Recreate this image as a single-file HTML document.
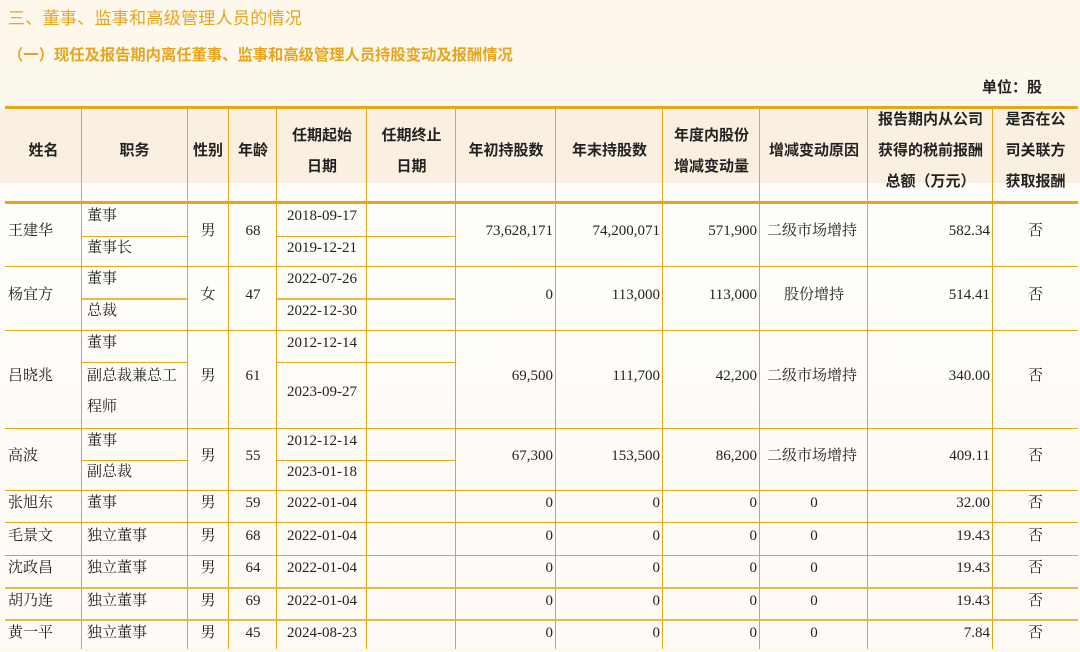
<!DOCTYPE html>
<html><head><meta charset="utf-8"><style>
*{margin:0;padding:0;box-sizing:border-box}
body{width:1080px;height:649px;overflow:hidden;position:relative;background:linear-gradient(#fdf7ec,#fdf9f2 40%,#fdf7ee);font-family:"Liberation Serif","Noto Serif CJK SC",serif;color:#222}
.h1{position:absolute;left:8px;top:4px;font:17px "Liberation Sans","Noto Sans CJK SC",sans-serif;color:#e8a51c;letter-spacing:.3px}
.h2{position:absolute;left:8px;top:43px;font:bold 15.3px "Liberation Sans","Noto Sans CJK SC",sans-serif;color:#e8a51c}
.unit{position:absolute;left:982px;top:76px;font:bold 15px "Liberation Sans","Noto Sans CJK SC",sans-serif;color:#222}
.hb{position:absolute;left:0;top:109px;width:1080px;height:74px;background:#faf0e1}
.wb{position:absolute;left:0;top:183px;width:1080px;height:466px;background:linear-gradient(#fffdf9,#fffcf7)}
.l{position:absolute;background:#e6a618}
.c{position:absolute;display:flex;align-items:center;font-size:15px;line-height:30px;padding-bottom:6px;white-space:nowrap}
.ce{justify-content:center;text-align:center}
.r{justify-content:flex-end;padding-right:3px}
.lf{padding-left:5px}
.hd{font:bold 15px "Liberation Sans","Noto Sans CJK SC",sans-serif;line-height:31px;color:#222;padding-bottom:0}
</style></head><body>
<div class="h1">三、董事、监事和高级管理人员的情况</div>
<div class="h2">（一）现任及报告期内离任董事、监事和高级管理人员持股变动及报酬情况</div>
<div class="unit">单位：股</div>
<div class="hb"></div>
<div class="wb"></div>

<div class="l" style="left:5px;top:106px;width:1073px;height:3px"></div>
<div class="l" style="left:5px;top:201px;width:1073px;height:3px"></div>
<div class="l" style="left:5px;top:266px;width:1073px;height:1px"></div>
<div class="l" style="left:5px;top:330px;width:1073px;height:1px"></div>
<div class="l" style="left:5px;top:428px;width:1073px;height:1px"></div>
<div class="l" style="left:5px;top:490px;width:1073px;height:1px"></div>
<div class="l" style="left:5px;top:522px;width:1073px;height:1px"></div>
<div class="l" style="left:5px;top:555px;width:1073px;height:1px"></div>
<div class="l" style="left:5px;top:587px;width:1073px;height:2px;opacity:.8"></div>
<div class="l" style="left:5px;top:619px;width:1073px;height:2px;opacity:.8"></div>
<div class="l" style="left:82px;top:236px;width:105px;height:1px"></div>
<div class="l" style="left:277px;top:236px;width:179px;height:1px"></div>
<div class="l" style="left:82px;top:298px;width:105px;height:2px;opacity:.8"></div>
<div class="l" style="left:277px;top:298px;width:179px;height:2px;opacity:.8"></div>
<div class="l" style="left:82px;top:362px;width:105px;height:1px"></div>
<div class="l" style="left:277px;top:362px;width:179px;height:1px"></div>
<div class="l" style="left:82px;top:460px;width:105px;height:1px"></div>
<div class="l" style="left:277px;top:460px;width:179px;height:1px"></div>
<div class="l" style="left:81px;top:107px;width:1px;height:542px"></div>
<div class="l" style="left:187px;top:107px;width:1px;height:542px"></div>
<div class="l" style="left:228px;top:107px;width:1px;height:542px"></div>
<div class="l" style="left:276px;top:107px;width:1px;height:542px"></div>
<div class="l" style="left:366px;top:107px;width:1px;height:542px"></div>
<div class="l" style="left:455px;top:107px;width:1px;height:542px"></div>
<div class="l" style="left:555px;top:107px;width:1px;height:542px"></div>
<div class="l" style="left:662px;top:107px;width:1px;height:542px"></div>
<div class="l" style="left:759px;top:107px;width:1px;height:542px"></div>
<div class="l" style="left:867px;top:107px;width:1px;height:542px"></div>
<div class="l" style="left:992px;top:107px;width:1px;height:542px"></div>

<div class="c ce hd" style="left:5px;top:135px;width:77px;height:30px">姓名</div>
<div class="c ce hd" style="left:82px;top:135px;width:105px;height:30px">职务</div>
<div class="c ce hd" style="left:187px;top:135px;width:42px;height:30px">性别</div>
<div class="c ce hd" style="left:229px;top:135px;width:48px;height:30px">年龄</div>
<div class="c ce hd" style="left:277px;top:120px;width:90px;height:62px">任期起始<br>日期</div>
<div class="c ce hd" style="left:367px;top:120px;width:89px;height:62px">任期终止<br>日期</div>
<div class="c ce hd" style="left:456px;top:135px;width:100px;height:30px">年初持股数</div>
<div class="c ce hd" style="left:556px;top:135px;width:107px;height:30px">年末持股数</div>
<div class="c ce hd" style="left:663px;top:120px;width:97px;height:62px">年度内股份<br>增减变动量</div>
<div class="c ce hd" style="left:760px;top:135px;width:108px;height:30px">增减变动原因</div>
<div class="c ce hd" style="left:868px;top:104px;width:125px;height:93px">报告期内从公司<br>获得的税前报酬<br>总额（万元）</div>
<div class="c ce hd" style="left:993px;top:104px;width:85px;height:93px">是否在公<br>司关联方<br>获取报酬</div>

<div class="c lf" style="left:3px;top:202px;width:79px;height:64px">王建华</div>
<div class="c lf" style="left:82px;top:202px;width:105px;height:34px">董事</div>
<div class="c lf" style="left:82px;top:236px;width:105px;height:30px">董事长</div>
<div class="c ce" style="left:187px;top:202px;width:42px;height:64px">男</div>
<div class="c ce" style="left:229px;top:202px;width:48px;height:64px">68</div>
<div class="c ce" style="left:277px;top:202px;width:90px;height:34px">2018-09-17</div>
<div class="c ce" style="left:277px;top:236px;width:90px;height:30px">2019-12-21</div>
<div class="c r" style="left:456px;top:202px;width:100px;height:64px">73,628,171</div>
<div class="c r" style="left:556px;top:202px;width:107px;height:64px">74,200,071</div>
<div class="c r" style="left:663px;top:202px;width:97px;height:64px">571,900</div>
<div class="c lf" style="left:762px;top:202px;width:106px;height:64px">二级市场增持</div>
<div class="c r" style="left:868px;top:202px;width:125px;height:64px">582.34</div>
<div class="c ce" style="left:993px;top:202px;width:85px;height:64px">否</div>

<div class="c lf" style="left:3px;top:266px;width:79px;height:64px">杨宜方</div>
<div class="c lf" style="left:82px;top:266px;width:105px;height:32px">董事</div>
<div class="c lf" style="left:82px;top:298px;width:105px;height:32px">总裁</div>
<div class="c ce" style="left:187px;top:266px;width:42px;height:64px">女</div>
<div class="c ce" style="left:229px;top:266px;width:48px;height:64px">47</div>
<div class="c ce" style="left:277px;top:266px;width:90px;height:32px">2022-07-26</div>
<div class="c ce" style="left:277px;top:298px;width:90px;height:32px">2022-12-30</div>
<div class="c r" style="left:456px;top:266px;width:100px;height:64px">0</div>
<div class="c r" style="left:556px;top:266px;width:107px;height:64px">113,000</div>
<div class="c r" style="left:663px;top:266px;width:97px;height:64px">113,000</div>
<div class="c ce" style="left:760px;top:266px;width:108px;height:64px">股份增持</div>
<div class="c r" style="left:868px;top:266px;width:125px;height:64px">514.41</div>
<div class="c ce" style="left:993px;top:266px;width:85px;height:64px">否</div>

<div class="c lf" style="left:3px;top:330px;width:79px;height:98px">吕晓兆</div>
<div class="c lf" style="left:82px;top:330px;width:105px;height:32px">董事</div>
<div class="c lf" style="left:82px;top:362px;width:105px;height:66px;white-space:normal;line-height:31px">副总裁兼总工<br>程师</div>
<div class="c ce" style="left:187px;top:330px;width:42px;height:98px">男</div>
<div class="c ce" style="left:229px;top:330px;width:48px;height:98px">61</div>
<div class="c ce" style="left:277px;top:330px;width:90px;height:32px">2012-12-14</div>
<div class="c ce" style="left:277px;top:362px;width:90px;height:66px">2023-09-27</div>
<div class="c r" style="left:456px;top:330px;width:100px;height:98px">69,500</div>
<div class="c r" style="left:556px;top:330px;width:107px;height:98px">111,700</div>
<div class="c r" style="left:663px;top:330px;width:97px;height:98px">42,200</div>
<div class="c lf" style="left:762px;top:330px;width:106px;height:98px">二级市场增持</div>
<div class="c r" style="left:868px;top:330px;width:125px;height:98px">340.00</div>
<div class="c ce" style="left:993px;top:330px;width:85px;height:98px">否</div>

<div class="c lf" style="left:3px;top:428px;width:79px;height:62px">高波</div>
<div class="c lf" style="left:82px;top:428px;width:105px;height:32px">董事</div>
<div class="c lf" style="left:82px;top:460px;width:105px;height:30px">副总裁</div>
<div class="c ce" style="left:187px;top:428px;width:42px;height:62px">男</div>
<div class="c ce" style="left:229px;top:428px;width:48px;height:62px">55</div>
<div class="c ce" style="left:277px;top:428px;width:90px;height:32px">2012-12-14</div>
<div class="c ce" style="left:277px;top:460px;width:90px;height:30px">2023-01-18</div>
<div class="c r" style="left:456px;top:428px;width:100px;height:62px">67,300</div>
<div class="c r" style="left:556px;top:428px;width:107px;height:62px">153,500</div>
<div class="c r" style="left:663px;top:428px;width:97px;height:62px">86,200</div>
<div class="c lf" style="left:762px;top:428px;width:106px;height:62px">二级市场增持</div>
<div class="c r" style="left:868px;top:428px;width:125px;height:62px">409.11</div>
<div class="c ce" style="left:993px;top:428px;width:85px;height:62px">否</div>

<div class="c lf" style="left:3px;top:490px;width:79px;height:32px">张旭东</div>
<div class="c lf" style="left:82px;top:490px;width:105px;height:32px">董事</div>
<div class="c ce" style="left:187px;top:490px;width:42px;height:32px">男</div>
<div class="c ce" style="left:229px;top:490px;width:48px;height:32px">59</div>
<div class="c ce" style="left:277px;top:490px;width:90px;height:32px">2022-01-04</div>
<div class="c r" style="left:456px;top:490px;width:100px;height:32px">0</div>
<div class="c r" style="left:556px;top:490px;width:107px;height:32px">0</div>
<div class="c r" style="left:663px;top:490px;width:97px;height:32px">0</div>
<div class="c ce" style="left:760px;top:490px;width:108px;height:32px">0</div>
<div class="c r" style="left:868px;top:490px;width:125px;height:32px">32.00</div>
<div class="c ce" style="left:993px;top:490px;width:85px;height:32px">否</div>

<div class="c lf" style="left:3px;top:522px;width:79px;height:33px">毛景文</div>
<div class="c lf" style="left:82px;top:522px;width:105px;height:33px">独立董事</div>
<div class="c ce" style="left:187px;top:522px;width:42px;height:33px">男</div>
<div class="c ce" style="left:229px;top:522px;width:48px;height:33px">68</div>
<div class="c ce" style="left:277px;top:522px;width:90px;height:33px">2022-01-04</div>
<div class="c r" style="left:456px;top:522px;width:100px;height:33px">0</div>
<div class="c r" style="left:556px;top:522px;width:107px;height:33px">0</div>
<div class="c r" style="left:663px;top:522px;width:97px;height:33px">0</div>
<div class="c ce" style="left:760px;top:522px;width:108px;height:33px">0</div>
<div class="c r" style="left:868px;top:522px;width:125px;height:33px">19.43</div>
<div class="c ce" style="left:993px;top:522px;width:85px;height:33px">否</div>

<div class="c lf" style="left:3px;top:555px;width:79px;height:32px">沈政昌</div>
<div class="c lf" style="left:82px;top:555px;width:105px;height:32px">独立董事</div>
<div class="c ce" style="left:187px;top:555px;width:42px;height:32px">男</div>
<div class="c ce" style="left:229px;top:555px;width:48px;height:32px">64</div>
<div class="c ce" style="left:277px;top:555px;width:90px;height:32px">2022-01-04</div>
<div class="c r" style="left:456px;top:555px;width:100px;height:32px">0</div>
<div class="c r" style="left:556px;top:555px;width:107px;height:32px">0</div>
<div class="c r" style="left:663px;top:555px;width:97px;height:32px">0</div>
<div class="c ce" style="left:760px;top:555px;width:108px;height:32px">0</div>
<div class="c r" style="left:868px;top:555px;width:125px;height:32px">19.43</div>
<div class="c ce" style="left:993px;top:555px;width:85px;height:32px">否</div>

<div class="c lf" style="left:3px;top:588px;width:79px;height:32px">胡乃连</div>
<div class="c lf" style="left:82px;top:588px;width:105px;height:32px">独立董事</div>
<div class="c ce" style="left:187px;top:588px;width:42px;height:32px">男</div>
<div class="c ce" style="left:229px;top:588px;width:48px;height:32px">69</div>
<div class="c ce" style="left:277px;top:588px;width:90px;height:32px">2022-01-04</div>
<div class="c r" style="left:456px;top:588px;width:100px;height:32px">0</div>
<div class="c r" style="left:556px;top:588px;width:107px;height:32px">0</div>
<div class="c r" style="left:663px;top:588px;width:97px;height:32px">0</div>
<div class="c ce" style="left:760px;top:588px;width:108px;height:32px">0</div>
<div class="c r" style="left:868px;top:588px;width:125px;height:32px">19.43</div>
<div class="c ce" style="left:993px;top:588px;width:85px;height:32px">否</div>

<div class="c lf" style="left:3px;top:620px;width:79px;height:32px">黄一平</div>
<div class="c lf" style="left:82px;top:620px;width:105px;height:32px">独立董事</div>
<div class="c ce" style="left:187px;top:620px;width:42px;height:32px">男</div>
<div class="c ce" style="left:229px;top:620px;width:48px;height:32px">45</div>
<div class="c ce" style="left:277px;top:620px;width:90px;height:32px">2024-08-23</div>
<div class="c r" style="left:456px;top:620px;width:100px;height:32px">0</div>
<div class="c r" style="left:556px;top:620px;width:107px;height:32px">0</div>
<div class="c r" style="left:663px;top:620px;width:97px;height:32px">0</div>
<div class="c ce" style="left:760px;top:620px;width:108px;height:32px">0</div>
<div class="c r" style="left:868px;top:620px;width:125px;height:32px">7.84</div>
<div class="c ce" style="left:993px;top:620px;width:85px;height:32px">否</div>
</body></html>
